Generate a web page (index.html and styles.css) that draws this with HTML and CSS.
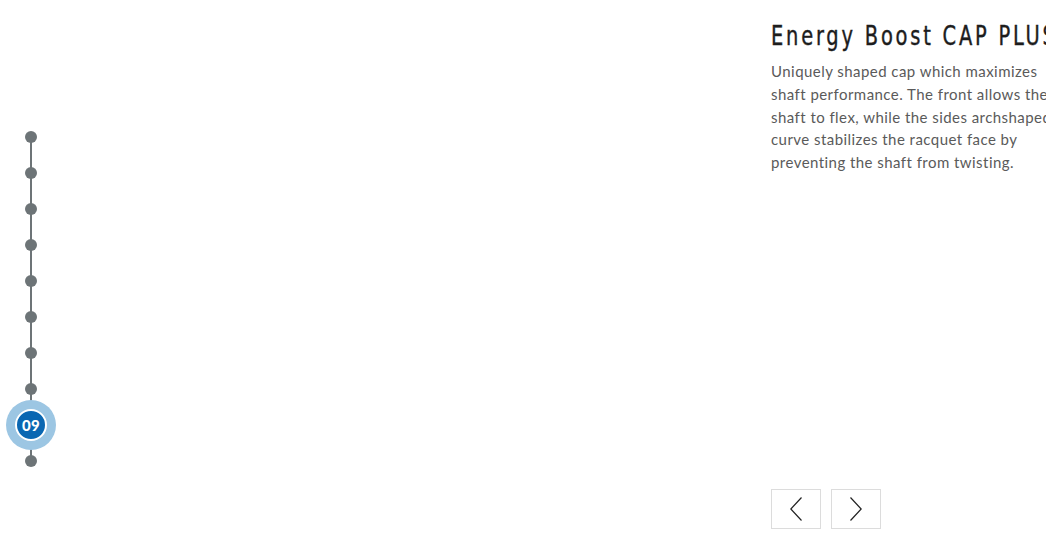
FILE: index.html
```html
<!DOCTYPE html>
<html>
<head>
<meta charset="utf-8">
<link rel="stylesheet" href="styles.css">
</head>
<body>
<div class="page">
  <nav class="timeline">
    <div class="step"><span class="dot"></span></div>
    <div class="step"><span class="dot"></span></div>
    <div class="step"><span class="dot"></span></div>
    <div class="step"><span class="dot"></span></div>
    <div class="step"><span class="dot"></span></div>
    <div class="step"><span class="dot"></span></div>
    <div class="step"><span class="dot"></span></div>
    <div class="step"><span class="dot"></span></div>
    <div class="step"><span class="active"><span class="num">09</span></span></div>
    <div class="step"><span class="dot"></span></div>
  </nav>
  <section class="content">
    <h1 class="title">Energy Boost CAP PLUS</h1>
    <p class="desc">Uniquely shaped cap which maximizes<br>shaft performance. The front allows the<br>shaft to flex, while the sides archshaped<br>curve stabilizes the racquet face by<br>preventing the shaft from twisting.</p>
    <div class="controls">
      <button class="nav-btn" aria-label="Previous">
        <svg width="12" height="24" viewBox="0 0 12 24"><path d="M11.5 0.5 L0.8 12 L11.5 23.5" fill="none" stroke="#222" stroke-width="1.2"/></svg>
      </button>
      <button class="nav-btn" aria-label="Next">
        <svg width="12" height="24" viewBox="0 0 12 24"><path d="M0.5 0.5 L11.2 12 L0.5 23.5" fill="none" stroke="#222" stroke-width="1.2"/></svg>
      </button>
    </div>
  </section>
</div>
</body>
</html>
```
FILE: styles.css
```css
html, body {
  margin: 0;
  padding: 0;
  background: #fff;
  overflow: hidden;
}
.page {
  width: 1046px;
  height: 538px;
  display: flex;
  overflow: hidden;
}
.timeline {
  width: 62px;
  flex: none;
  margin-top: 119px;
  height: 360px;
  display: flex;
  flex-direction: column;
  background: linear-gradient(#6d7477, #6d7477) center / 2px 324px no-repeat;
}
.step {
  height: 36px;
  display: flex;
  align-items: center;
  justify-content: center;
}
.dot {
  width: 12px;
  height: 12px;
  border-radius: 50%;
  background: #6d7477;
}
.active {
  width: 50px;
  height: 50px;
  border-radius: 50%;
  background: #9cc6e3;
  display: flex;
  align-items: center;
  justify-content: center;
  flex: none;
}
.num {
  width: 28px;
  height: 28px;
  border-radius: 50%;
  background: #0a67b2;
  border: 2px solid #fff;
  color: #fff;
  font-family: "Lato", "DejaVu Sans", sans-serif;
  font-weight: 900;
  font-size: 15px;
  letter-spacing: 0.3px;
  display: flex;
  align-items: center;
  justify-content: center;
}
.content {
  margin-left: 709px;
  flex: none;
  width: 300px;
  display: flex;
  flex-direction: column;
}
.title {
  margin: 19px 0 0;
  font-family: "DejaVu Sans Condensed", "DejaVu Sans", sans-serif;
  font-weight: normal;
  font-size: 27px;
  letter-spacing: 3.5px;
  line-height: 34px;
  color: #1d1d1d;
  white-space: nowrap;
  transform: scaleX(0.8);
  transform-origin: left center;
  -webkit-text-stroke: 0.4px #1d1d1d;
}
.desc {
  margin: 7px 0 0;
  font-family: "Lato", "Open Sans", sans-serif;
  font-size: 15px;
  letter-spacing: 0.45px;
  line-height: 22.8px;
  color: #5a5a5a;
  white-space: nowrap;
}
.controls {
  margin-top: auto;
  margin-bottom: 9px;
  display: flex;
  gap: 10px;
}
.nav-btn {
  width: 50px;
  height: 40px;
  border: 1px solid #dcdcdc;
  background: #fff;
  padding: 0;
  display: flex;
  align-items: center;
  justify-content: center;
}
```
